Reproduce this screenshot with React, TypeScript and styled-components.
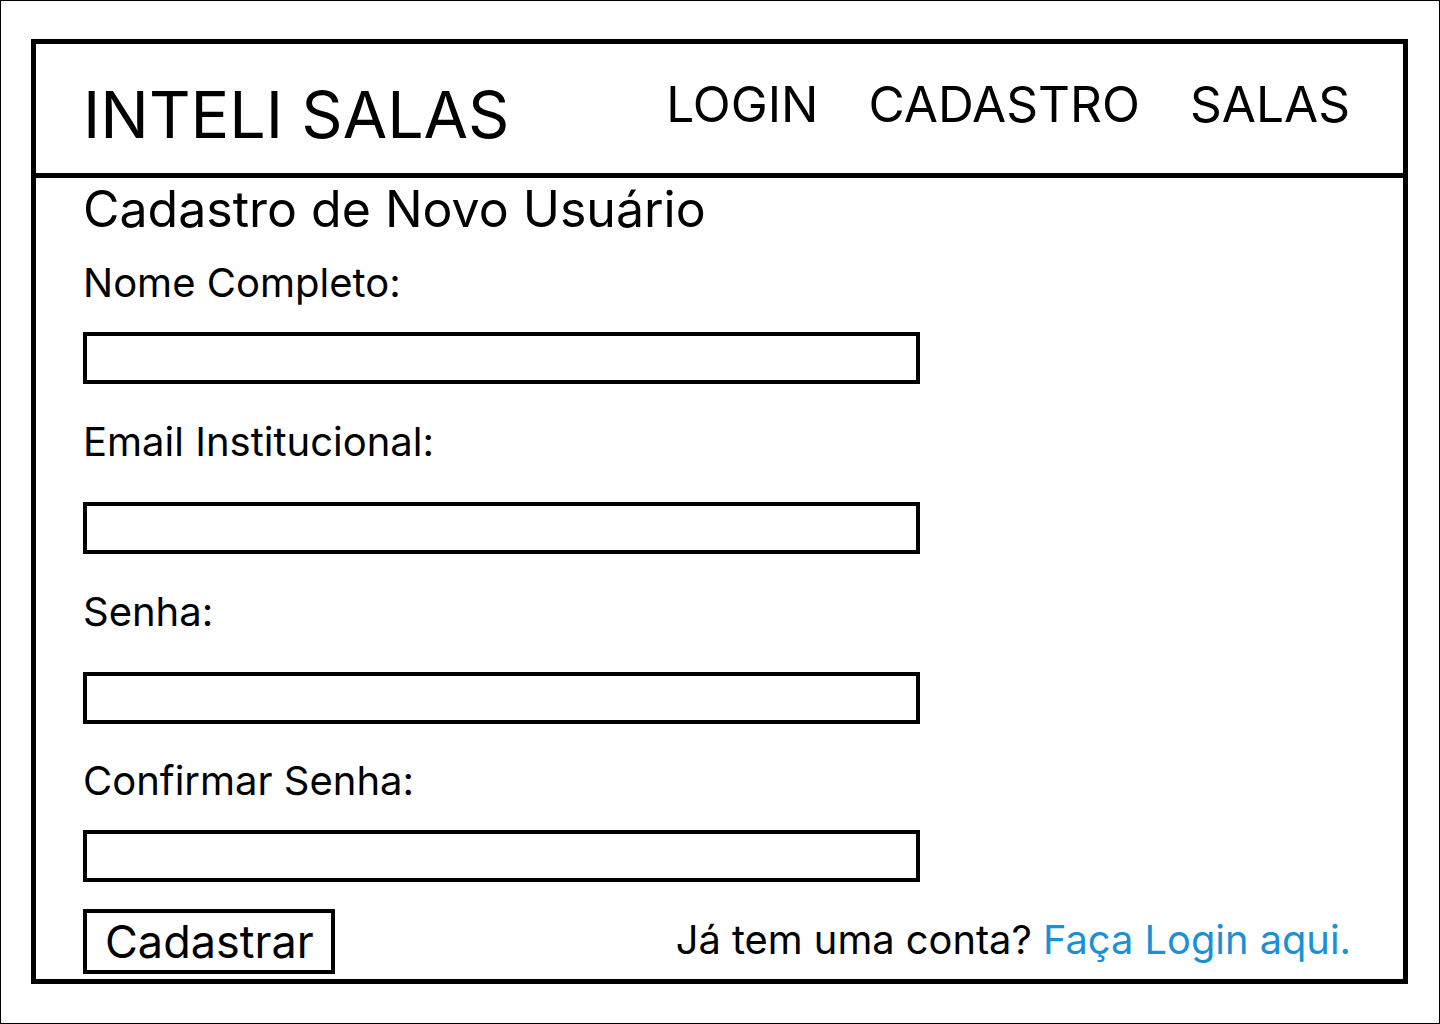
import React from "react";
import styled, { createGlobalStyle } from "styled-components";

const GlobalStyle = createGlobalStyle`
  html, body {
    margin: 0;
    padding: 0;
    background: #ffffff;
  }
  body {
    font-family: Inter, "Noto Sans", "Liberation Sans", sans-serif;
    color: #000000;
  }
  * {
    box-sizing: border-box;
  }
`;

const Page = styled("div")`
  width: 1440px;
  height: 1024px;
  border: 1px solid #000;
  padding: 38px 0 0 30px;
  background: #fff;
`;

const Frame = styled("div")`
  width: 1377px;
  height: 945px;
  border: 5px solid #000;
  display: flex;
  flex-direction: column;
`;

const Header = styled("header")`
  height: 134px;
  border-bottom: 5px solid #000;
  display: flex;
  justify-content: space-between;
  align-items: flex-start;
  padding: 0 53px 0 47px;
`;

const Logo = styled("div")`
  font-size: 64.5px;
  line-height: 1;
  font-weight: 400;
  margin-top: 39px;
  white-space: nowrap;
`;

const Nav = styled("nav")`
  display: flex;
  gap: 50px;
  margin-top: 36px;
`;

const NavLink = styled("a")`
  font-size: 49.6px;
  line-height: 1;
  color: #000;
  text-decoration: none;
  white-space: nowrap;
`;

const Main = styled("main")`
  display: flex;
  flex-direction: column;
  align-items: flex-start;
  padding: 0 52px 0 47px;
`;

const Title = styled("h1")`
  font-size: 50px;
  line-height: 1;
  font-weight: 400;
  margin: 6px 0 0;
`;

const Label = styled("label")<{ $top: number }>`
  display: block;
  font-size: 40px;
  line-height: 1;
  margin-top: ${(p) => p.$top}px;
`;

const Input = styled("input")<{ $top: number }>`
  display: block;
  width: 837px;
  height: 52px;
  border: 4px solid #000;
  border-radius: 0;
  background: #fff;
  outline: none;
  padding: 0 10px;
  font-family: inherit;
  font-size: 24px;
  margin-top: ${(p) => p.$top}px;
`;

const Footer = styled("div")`
  width: 100%;
  display: flex;
  justify-content: space-between;
  align-items: center;
  margin-top: 27px;
`;

const Button = styled("button")`
  width: 252px;
  height: 65px;
  border: 4px solid #000;
  border-radius: 0;
  background: #fff;
  padding: 0 16px 0 18px;
  font-family: inherit;
  font-size: 45px;
  line-height: 1;
  color: #000;
  text-align: left;
  cursor: pointer;
`;

const LoginHint = styled("p")`
  margin: 0 0 4px;
  font-size: 39.8px;
  line-height: 1;
  white-space: nowrap;
`;

const HintLink = styled("a")`
  color: #1b90d7;
  text-decoration: none;
`;

const fields = [
  { label: "Nome Completo:", type: "text", labelTop: 29, inputTop: 29 },
  { label: "Email Institucional:", type: "email", labelTop: 38, inputTop: 40 },
  { label: "Senha:", type: "password", labelTop: 38, inputTop: 40 },
  { label: "Confirmar Senha:", type: "password", labelTop: 37, inputTop: 29 },
];

export default function App() {
  return (
    <>
      <GlobalStyle />
      <Page>
        <Frame>
          <Header>
            <Logo>INTELI SALAS</Logo>
            <Nav>
              <NavLink href="#">LOGIN</NavLink>
              <NavLink href="#">CADASTRO</NavLink>
              <NavLink href="#">SALAS</NavLink>
            </Nav>
          </Header>
          <Main>
            <Title>Cadastro de Novo Usuário</Title>
            {fields.map((f) => (
              <React.Fragment key={f.label}>
                <Label $top={f.labelTop}>{f.label}</Label>
                <Input $top={f.inputTop} type={f.type} />
              </React.Fragment>
            ))}
            <Footer>
              <Button>Cadastrar</Button>
              <LoginHint>
                Já tem uma conta? <HintLink href="#">Faça Login aqui.</HintLink>
              </LoginHint>
            </Footer>
          </Main>
        </Frame>
      </Page>
    </>
  );
}
